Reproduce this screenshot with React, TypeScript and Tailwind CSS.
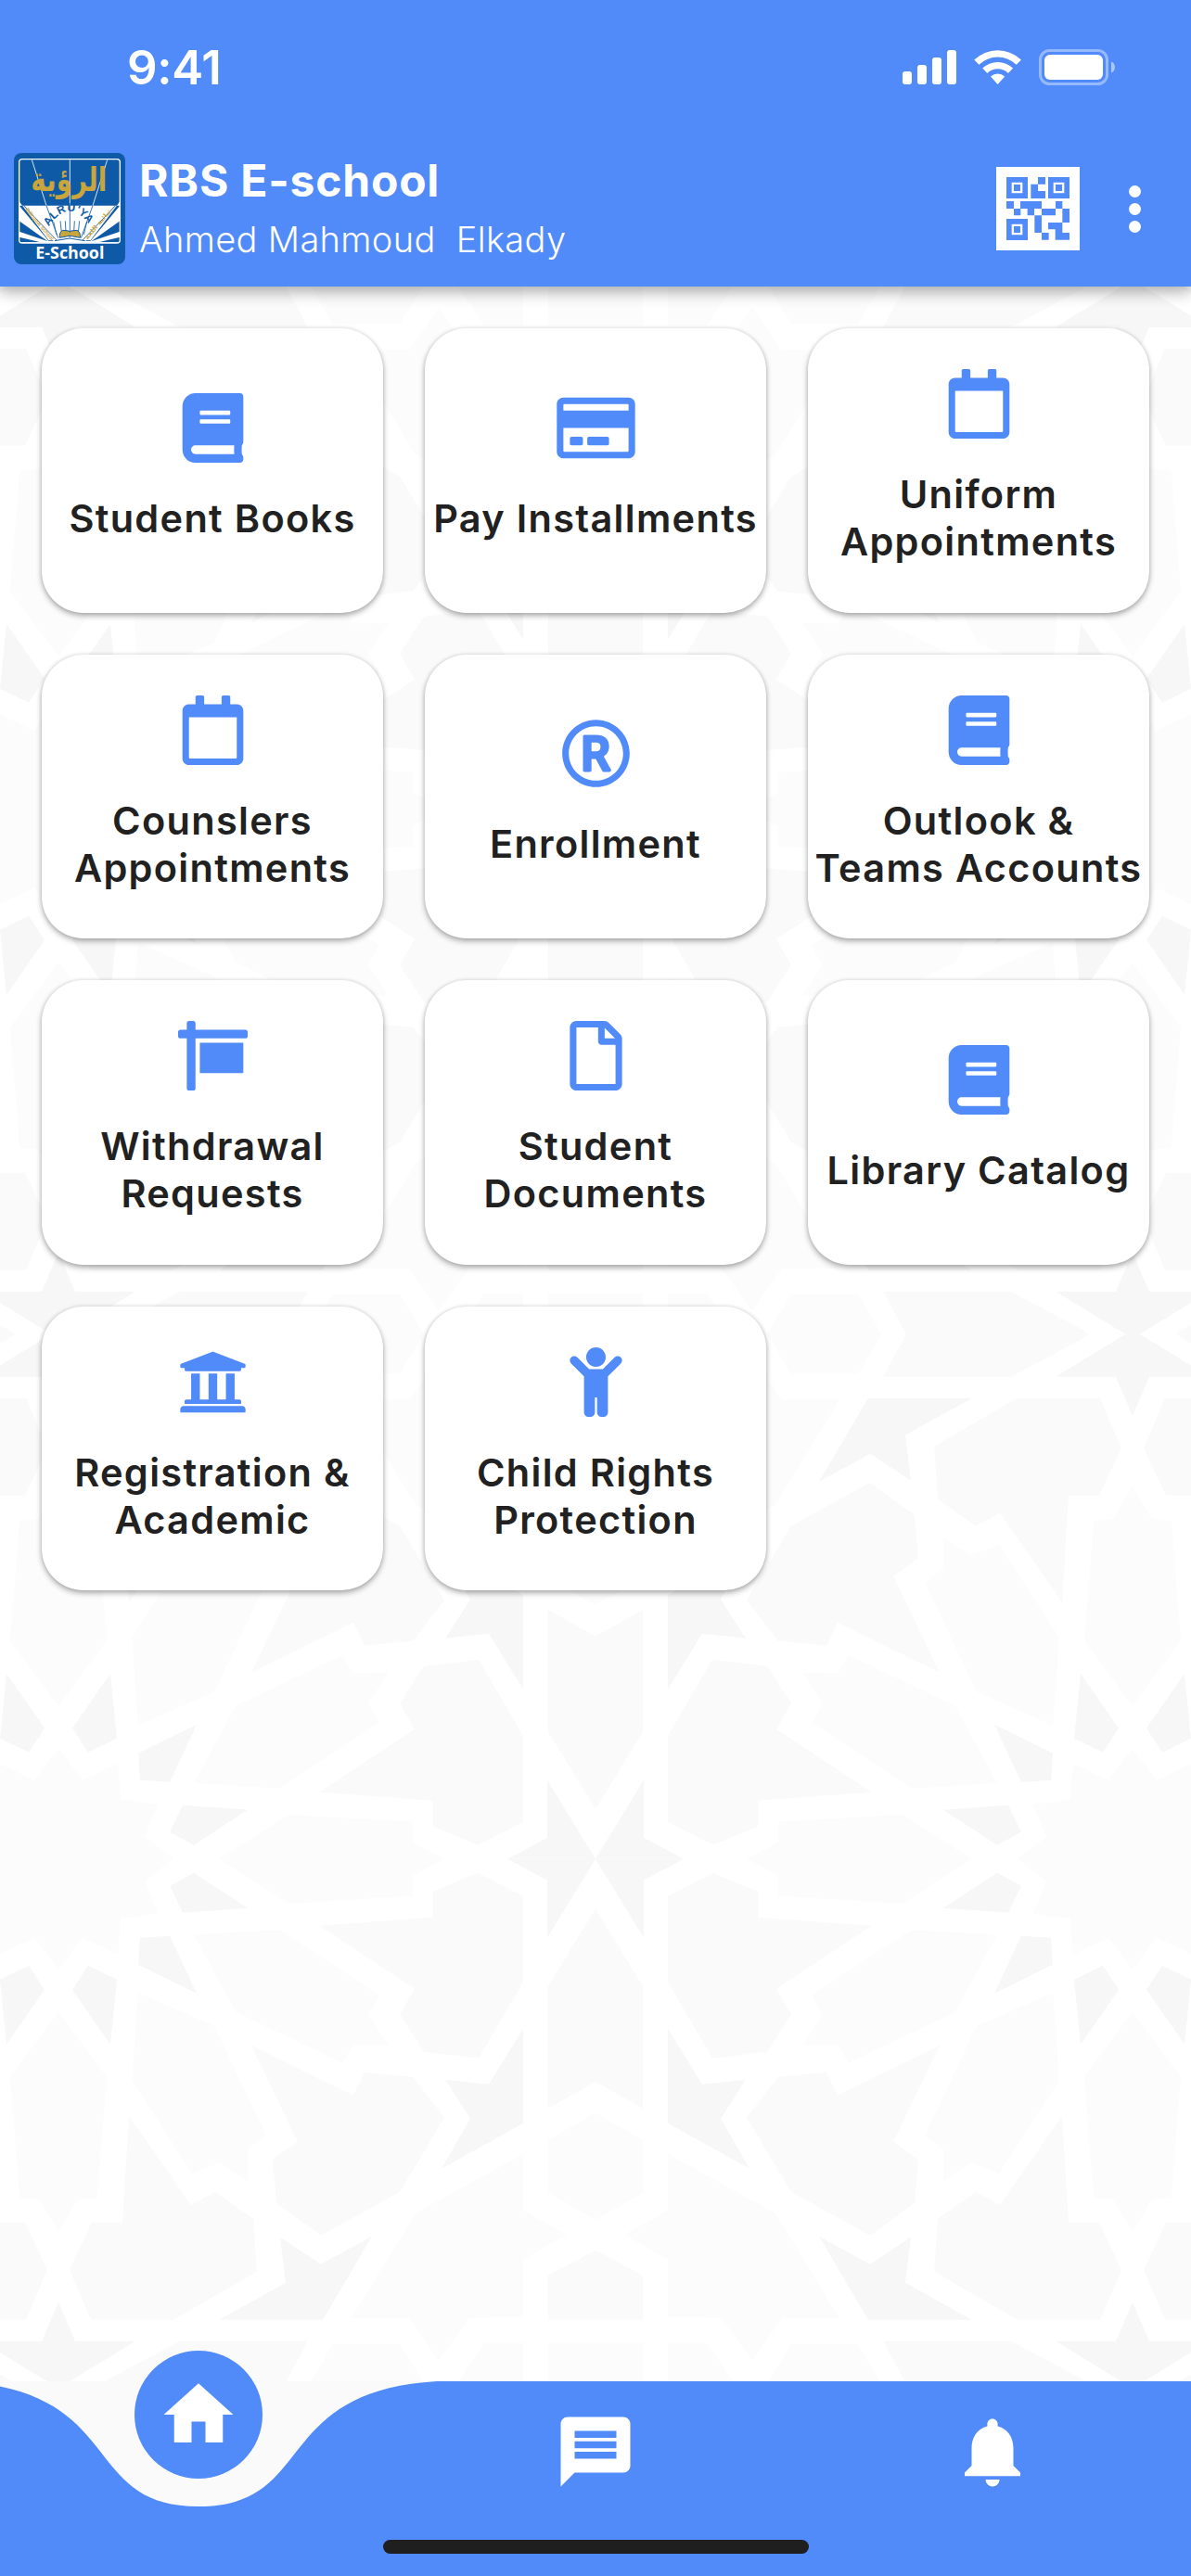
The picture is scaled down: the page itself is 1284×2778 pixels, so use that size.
import React from 'react';
import type { IconType } from 'react-icons';
import {
  FaBook,
  FaChild,
  FaRegCalendar,
  FaRegCreditCard,
  FaRegFile,
  FaRegRegistered,
  FaSign,
  FaUniversity,
} from 'react-icons/fa';
import { MdHome, MdMessage, MdNotifications } from 'react-icons/md';

interface Service {
  label: string;
  icon: IconType;
}

const services: Service[] = [
  { label: 'Student Books', icon: FaBook },
  { label: 'Pay Installments', icon: FaRegCreditCard },
  { label: 'Uniform\nAppointments', icon: FaRegCalendar },
  { label: 'Counslers\nAppointments', icon: FaRegCalendar },
  { label: 'Enrollment', icon: FaRegRegistered },
  { label: 'Outlook &\nTeams Accounts', icon: FaBook },
  { label: 'Withdrawal\nRequests', icon: FaSign },
  { label: 'Student\nDocuments', icon: FaRegFile },
  { label: 'Library Catalog', icon: FaBook },
  { label: 'Registration &\nAcademic', icon: FaUniversity },
  { label: 'Child Rights\nProtection', icon: FaChild },
];

// One quarter of the arabesque tile, mirrored in both directions
const tileShapes = [
  {
    fill: '#f7f7f7',
    points: [
      '0,0 52,85 52,23 95,0',
      '78,183 115,243 162,238 135,280 166,334 78,285',
      '241,407 296,437 340,408 334,457 406,497 294,497',
      '375,53 433,15 459,29 445,58',
      '459,83 491,85 493,114 430,145',
      '516,130 547,115 564,141 523,200',
      '579,478 561,520 496,520 563,561 572,566 579,566',
    ],
  },
  {
    fill: '#fafafa',
    points: [
      '0,54 51,137 51,269 0,240',
      '78,40 127,15 175,35 175,63 298,72 195,140 211,168 185,208 126,215 78,133',
      '0,422 51,449 51,497 0,497',
      '163,279 197,235 249,230 261,255 371,201 321,305 348,324 344,371 296,406 211,359',
      '503,277 510,392 543,392 567,443 544,497 455,497 365,445 369,388 410,359 436,373',
      '310,520 448,520 525,561 532,566 335,566',
    ],
  },
  {
    fill: '#fcfcfc',
    points: [
      '0,274 51,303 51,360 0,389',
      '78,318 194,382 263,495 201,495 169,541 136,495 78,494 78,432 31,405 78,379',
      '0,522 51,522 51,566 0,566',
      '78,522 120,522 150,566 78,566',
      '185,566 211,523 283,523 308,566',
      '163,0 197,18 197,40 331,48 406,0',
      '233,147 245,168 223,201 261,200 273,220 388,165 433,82 341,76',
      '411,180 493,144 500,239 435,339 405,328 375,347 375,313 355,298',
      '579,165 527,235 537,365 558,367 579,402',
      '455,0 486,24 472,59 512,64 515,103 553,85 579,119 579,0',
    ],
  },
];

const Pattern = () => {
  const columns = [-516, 642, 1800];
  const rows = [563.7, 1695.7];

  return (
    <svg className="absolute inset-0 h-full w-full" viewBox="0 0 1284 2259" preserveAspectRatio="none">
      <defs>
        <g id="quarter">
          {tileShapes.map((group) => (
            <g key={group.fill} fill={group.fill}>
              {group.points.map((p) => (
                <polygon key={p} points={p} />
              ))}
            </g>
          ))}
        </g>
        <g id="tile">
          <use href="#quarter" />
          <use href="#quarter" transform="scale(-1 1)" />
          <use href="#quarter" transform="scale(1 -1)" />
          <use href="#quarter" transform="scale(-1 -1)" />
        </g>
      </defs>
      {rows.map((y) => columns.map((x) => <use key={`${x}-${y}`} href="#tile" x={x} y={y} />))}
    </svg>
  );
};

const StatusBar = () => (
  <div className="flex h-[145px] items-start justify-between">
    <span className="ml-[137px] mt-[43px] text-[51px] font-semibold leading-[60px] tracking-[-0.3px]">9:41</span>
    <svg className="mr-[80px] mt-[50px] h-[46px] w-[234px]" viewBox="970 50 234 46" fill="#fff">
      <rect x="973" y="77" width="10" height="14" rx="3" />
      <rect x="989" y="70" width="10" height="21" rx="3" />
      <rect x="1005" y="62" width="10" height="29" rx="3" />
      <rect x="1021" y="54" width="10" height="37" rx="3" />
      <path d="M1050.3 64.5a36.3 36.3 0 0 1 50.6 0l-5.1 5.2a29 29 0 0 0-40.4 0z" />
      <path d="M1059.2 73.6a23.5 23.5 0 0 1 32.9 0l-5.2 5.3a16.2 16.2 0 0 0-22.5 0z" />
      <path d="M1068 82.6a11 11 0 0 1 15.2 0l-7.6 8.4z" />
      <rect x="1121.5" y="54.5" width="72" height="36" rx="10" fill="none" stroke="#fff" strokeOpacity="0.4" strokeWidth="3" />
      <rect x="1126" y="59" width="63" height="27" rx="6" />
      <path d="M1198 66.5c5.300 1.500 5.300 10.500 0 12z" fillOpacity="0.5" />
    </svg>
  </div>
);

const Logo = () => (
  <svg className="h-[120px] w-[120px] overflow-visible" viewBox="0 0 360 360">
    <rect width="360" height="360" rx="24" fill="#0f5aa6" />
    <path d="M17 170h326v112q0 8-8 8H25q-8 0-8-8z" fill="#fff" />
    <g fill="#0f5aa6">
      <path d="M17 170V150L128 284h-16z" />
      <path d="M343 170V150L232 284h16z" />
      <path d="M17 220v34l93 32zM17 272v16h66zM343 220v34l-93 32zM343 272v16h-66z" />
    </g>
    <path d="M17 157 112 282h26L32 170H17zM343 157 248 282h-26L328 170h15z" fill="#fff" />
    <g stroke="#fff" strokeWidth="2.500">
      <path d="M58 22 105 170M302 22 255 170M181 22v148" />
    </g>
    <g stroke="#0f5aa6" strokeWidth="2.500" fill="none">
      <path d="M105 170 143 275M255 170 217 275M181 170v104M33 172l105 110M327 172 222 282" />
      <path d="M128 222l10 42M150 220l4 36M166 220l2 36M196 220l-2 36M212 220l-4 36M236 222l-10 42" />
    </g>
    <path d="M148 274q-2-18 10-24l20 2 3 4 3-4 20-2q12 6 10 24l-33-6z" fill="#c9a53b" stroke="#0f5aa6" strokeWidth="3" />
    <path d="M132 284l48-8 50 8" fill="none" stroke="#0f5aa6" strokeWidth="3" />
    <rect x="17" y="20" width="326" height="271" rx="10" fill="none" stroke="#fff" strokeWidth="4" />
    <path id="arc" d="M113 238Q180 138 248 238" fill="none" />
    <text fontFamily="Liberation Sans, sans-serif" fontWeight="700" fontSize="36" fill="#0f5aa6">
      <textPath href="#arc" textLength="164">ALRU'YA</textPath>
    </text>
    <text
      transform="translate(37 184) rotate(50)"
      fontFamily="Liberation Sans, sans-serif"
      fontWeight="700"
      fontSize="17"
      fill="#c9a53b"
      textLength="130"
      lengthAdjust="spacingAndGlyphs"
    >
      Bilingual School
    </text>
    <text
      transform="translate(238 281) rotate(-50)"
      fontFamily="DejaVu Sans, sans-serif"
      fontWeight="700"
      fontSize="20"
      fill="#c9a53b"
      textLength="120"
      lengthAdjust="spacingAndGlyphs"
    >
      ثنائية اللغة
    </text>
    <text
      x="178"
      y="122"
      textAnchor="middle"
      fontFamily="DejaVu Sans, sans-serif"
      fontWeight="700"
      fontSize="108"
      fill="#c9a53b"
      textLength="246"
      lengthAdjust="spacingAndGlyphs"
    >
      الرؤية
    </text>
    <text
      x="181"
      y="342"
      textAnchor="middle"
      fontFamily="Open Sans, sans-serif"
      fontWeight="700"
      fontSize="54"
      fill="#fff"
      textLength="222"
      lengthAdjust="spacingAndGlyphs"
    >
      E-School
    </text>
  </svg>
);

const QrCode = () => (
  <svg className="h-[90px] w-[90px]" viewBox="0 0 270 270">
    <rect width="270" height="270" fill="#fff" />
    <path
      fill="#508bf9"
      fillRule="evenodd"
      d="M33 33h69v69H33zM50 50v35h35V50zM57 57h21v21H57zM168 33h69v69h-69zM185 50v35h35V50zM192 57h21v21h-21zM33 168h69v69H33zM50 185v35h35v-35zM57 192h21v21H57z"
    />
    <path
      fill="#508bf9"
      d="M135 33h24v23h-24v22h24v24h-47V56h23zM33 111h24v24H33zM57 135h22v22H57zM78 111h69v24h-24v22h-22v-22H78zM147 135h45v22h-45zM192 111h22v24h-22zM214 135h23v45h-23zM124 157h23v56h-23zM147 213h23v23h-23zM168 180h46v33h23v23h-46v-34h-23z"
    />
  </svg>
);

const Header = () => {
  return (
    <header className="relative z-10 h-[309px] bg-[#508bf9] text-white shadow-[0_6px_15px_rgba(0,0,0,0.32)]">
      <StatusBar />
      <div className="flex items-start pl-[15px] pt-5">
        <Logo />
        <div className="ml-[15px] flex-1">
          <h1 className="text-[48px] font-bold leading-[60px] tracking-[0.8px]">RBS E-school</h1>
          <p className="mt-[3px] whitespace-pre text-[38px] font-light leading-[60px] tracking-[0.35px]">Ahmed Mahmoud  Elkady</p>
        </div>
        <div className="mt-[15px] flex items-center">
          <QrCode />
          <button className="ml-[53px] mr-[54px] flex flex-col gap-[6px]" aria-label="More">
            <span className="h-[13px] w-[13px] rounded-full bg-white" />
            <span className="h-[13px] w-[13px] rounded-full bg-white" />
            <span className="h-[13px] w-[13px] rounded-full bg-white" />
          </button>
        </div>
      </div>
    </header>
  );
};

const ServiceCard = ({ label, icon: Icon }: Service) => (
  <button className="flex flex-col items-center justify-center gap-[35px] rounded-[45px] bg-white pb-1.5 shadow-[0_3px_6px_rgba(0,0,0,0.32),0_0_4px_rgba(0,0,0,0.1)]">
    <Icon className="h-[75px] w-[85px] text-[#508bf9]" />
    <span className="whitespace-pre text-center text-[41.5px] font-semibold leading-[51px] tracking-[1.3px] text-[#212121]">
      {label}
    </span>
  </button>
);

const BottomNav = () => {
  return (
    <nav className="relative h-[210px] bg-[#fafafa]">
      <svg className="absolute inset-0 h-full w-full" viewBox="0 0 1284 210">
        <path d="M-43 0C137 11 86 135 214 135S291 11 471 0H1284V210H-43z" fill="#508bf9" />
      </svg>
      <div className="relative grid grid-cols-3 justify-items-center text-white">
        <button className="-mt-[33px] flex h-[138px] w-[138px] items-center justify-center rounded-full bg-[#508bf9]" aria-label="Home">
          <MdHome className="h-[90px] w-[90px]" />
        </button>
        <button className="mt-[31px] h-[90px]" aria-label="Messages">
          <MdMessage className="h-[90px] w-[90px]" />
        </button>
        <button className="mt-[31px] h-[90px]" aria-label="Notifications">
          <MdNotifications className="h-[90px] w-[90px]" />
        </button>
      </div>
      <div className="absolute bottom-6 left-[413px] h-[15px] w-[459px] rounded-full bg-[#1f1f1f]" />
    </nav>
  );
};

const App = () => {
  return (
    <div className="flex h-[2778px] w-[1284px] flex-col overflow-hidden bg-white font-['Inter',sans-serif]">
      <Header />
      <main className="relative flex-1">
        <Pattern />
        <div className="relative grid auto-rows-[306.6px] grid-cols-3 gap-[45px] px-[45px] pt-[45px]">
          {services.map((service) => (
            <ServiceCard key={service.label} {...service} />
          ))}
        </div>
      </main>
      <BottomNav />
    </div>
  );
};

export default App;
